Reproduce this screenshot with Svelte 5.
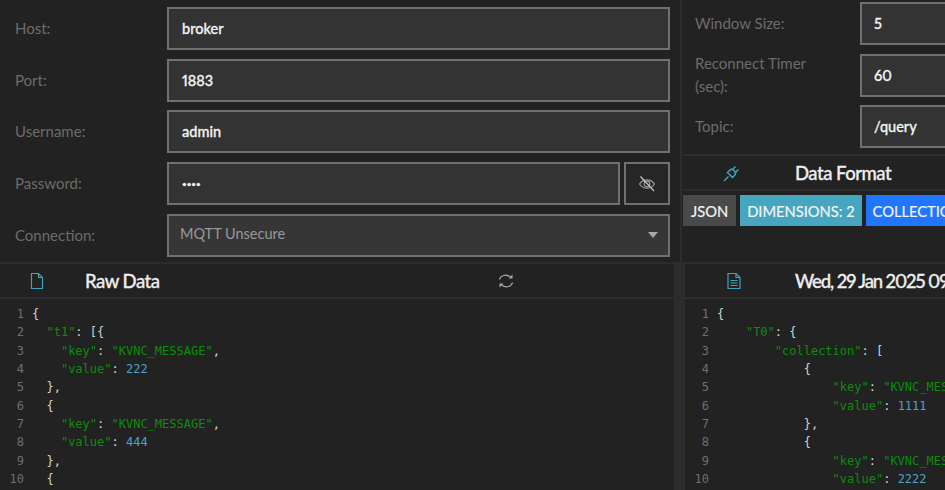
<script>
	const leftFields = [
		{ label: 'Host:', value: 'broker' },
		{ label: 'Port:', value: '1883' },
		{ label: 'Username:', value: 'admin' }
	];
	const rightFields = [
		{ label: 'Window Size:', value: '5' },
		{ label: 'Reconnect Timer (sec):', value: '60' },
		{ label: 'Topic:', value: '/query' }
	];
	const rawLines = [
		[['p', '{']],
		[['p', '  '], ['s', '"t1"'], ['p', ': [{']],
		[['p', '    '], ['s', '"key"'], ['p', ': '], ['s', '"KVNC_MESSAGE"'], ['p', ',']],
		[['p', '    '], ['s', '"value"'], ['p', ': '], ['n', '222']],
		[['p', '  },']],
		[['p', '  {']],
		[['p', '    '], ['s', '"key"'], ['p', ': '], ['s', '"KVNC_MESSAGE"'], ['p', ',']],
		[['p', '    '], ['s', '"value"'], ['p', ': '], ['n', '444']],
		[['p', '  },']],
		[['p', '  {']]
	];
	const parsedLines = [
		[['p', '{']],
		[['p', '    '], ['s', '"T0"'], ['p', ': {']],
		[['p', '        '], ['s', '"collection"'], ['p', ': [']],
		[['p', '            {']],
		[['p', '                '], ['s', '"key"'], ['p', ': '], ['s', '"KVNC_MESSAGE"'], ['p', ',']],
		[['p', '                '], ['s', '"value"'], ['p', ': '], ['n', '1111']],
		[['p', '            },']],
		[['p', '            {']],
		[['p', '                '], ['s', '"key"'], ['p', ': '], ['s', '"KVNC_MESSAGE"'], ['p', ',']],
		[['p', '                '], ['s', '"value"'], ['p', ': '], ['n', '2222']]
	];
</script>

{#snippet code(lines)}
	<div class="code">
		{#each lines as line, i}
			<div class="line">
				<span class="num">{i + 1}</span>
				<span class="src">{#each line as part}<span class={part[0]}>{part[1]}</span>{/each}</span>
			</div>
		{/each}
	</div>
{/snippet}

<div class="page">
	<div class="top">
		<section class="form">
			{#each leftFields as f}
				<div class="row">
					<span class="label">{f.label}</span>
					<div class="input">{f.value}</div>
				</div>
			{/each}
			<div class="row">
				<span class="label">Password:</span>
				<div class="pass">
					<div class="input dots">••••</div>
					<button class="eye" aria-label="Show password">
						<svg width="18" height="18" viewBox="0 0 18 18" fill="none" stroke="#9a9a9a" stroke-width="1.2">
							<path d="M1.5 9C3.5 6 6 4.8 9 4.8S14.5 6 16.500 9C14.500 12 12 13.200 9 13.200S3.500 12 1.500 9Z" />
							<circle cx="9" cy="9" r="2.800" />
							<path d="M2.500 1.500L16 16" stroke="#c4c4c4" />
						</svg>
					</button>
				</div>
			</div>
			<div class="row">
				<span class="label">Connection:</span>
				<div class="input select">MQTT Unsecure<span class="caret"></span></div>
			</div>
		</section>
		<section class="side">
			<div class="side-form">
				{#each rightFields as f}
					<div class="row side-row">
						<span class="label">{f.label}</span>
						<div class="input">{f.value}</div>
					</div>
				{/each}
			</div>
			<div class="head side-head">
				<span class="ico">
					<svg width="18" height="18" viewBox="0 0 18 18" fill="none" stroke="#3fa3bd" stroke-width="1.500">
						<path d="M1 17L5.500 12.500" />
						<path d="M4.500 8.500L9.500 13.500L11.500 11.500Q13.500 9.500 11.500 7L10.500 6Q8.500 4.500 6.500 6.500Z" />
						<path d="M9.500 5.500L12.500 2.500M12.500 8.500L15.500 5.500" />
					</svg>
				</span>
				<span class="title">Data Format</span>
			</div>
			<div class="tags">
				<span class="tag grey">JSON</span>
				<span class="tag teal">DIMENSIONS: 2</span>
				<span class="tag blue">COLLECTION</span>
			</div>
		</section>
	</div>
	<div class="bottom">
		<section class="panel raw">
			<div class="head">
				<span class="ico">
					<svg width="16" height="18" viewBox="0 0 16 18" fill="none" stroke="#3fa3bd" stroke-width="1.200">
						<path d="M2.500 1.500H9.500L13.500 5.500V16.500H2.500ZM9.500 1.500V5.500H13.500" />
					</svg>
				</span>
				<span class="title">Raw Data</span>
				<svg class="sync" width="16" height="18" viewBox="0 0 16 18" fill="none" stroke="#a8a8a8" stroke-width="1.100">
					<path d="M1.500 7.500C2.500 3.500 7.500 1.500 12.500 5" />
					<path d="M14.500 10.500C13.500 14.500 8.500 16.500 3.500 13" />
					<path d="M14.500 2.500V6.500H10.500Z" fill="#a8a8a8" stroke="none" />
					<path d="M1.500 15.500V11.500H5.500Z" fill="#a8a8a8" stroke="none" />
				</svg>
			</div>
			{@render code(rawLines)}
		</section>
		<div class="gutter"></div>
		<section class="panel parsed">
			<div class="head">
				<span class="ico">
					<svg width="16" height="18" viewBox="0 0 16 18" fill="none" stroke="#3fa3bd" stroke-width="1.200">
						<path d="M2 1.500H10L14 5.500V16.500H2ZM10 1.500V5.500H14" />
						<path d="M4.500 8.500H11.500M4.500 11H11.500M4.500 13.500H11.500" />
					</svg>
				</span>
				<span class="title date">Wed, 29 Jan 2025 09</span>
			</div>
			{@render code(parsedLines)}
		</section>
	</div>
</div>

<style>
	:global(body) {
		margin: 0;
		background: #222222;
		overflow: hidden;
	}
	.page {
		width: 945px;
		height: 490px;
		overflow: hidden;
		display: flex;
		flex-direction: column;
		font-family: "Lato", "Noto Sans", sans-serif;
		font-variant-numeric: proportional-nums;
		color: #fff;
	}
	.top {
		display: flex;
		height: 262px;
		flex: none;
	}
	.form {
		width: 670px;
		padding: 7px 0 0 15px;
		box-sizing: border-box;
		flex: none;
		display: flex;
		flex-direction: column;
		gap: 8.7px;
	}
	.row {
		display: grid;
		grid-template-columns: 152px 1fr;
		align-items: center;
	}
	.label {
		color: #6c6c6c;
		font-size: 15px;
		line-height: 23px;
	}
	.input {
		box-sizing: border-box;
		height: 43px;
		border: 2px solid #707070;
		background: #333333;
		padding: 0 13px;
		display: flex;
		align-items: center;
		font-size: 14.500px;
		font-weight: 500;
		-webkit-text-stroke: 0.3px #f2f2f2;
		color: #f2f2f2;
	}
	.pass {
		display: flex;
		gap: 4px;
	}
	.dots {
		flex: 1;
		font-size: 8px;
	}
	.eye {
		box-sizing: border-box;
		width: 46px;
		height: 43px;
		padding: 0;
		border: 2px solid #707070;
		background: #262626;
		display: flex;
		align-items: center;
		justify-content: center;
	}
	.select {
		position: relative;
		background: #363636;
		color: #999999;
		font-weight: 400;
		-webkit-text-stroke: 0;
		padding: 0 0 4px 11px;
		font-size: 14.500px;
	}
	.caret {
		position: absolute;
		right: 10px;
		top: 16px;
		border: 5px solid transparent;
		border-top: 6px solid #a8a8a8;
		border-bottom: 0;
	}
	.side {
		flex: 1;
		min-width: 0;
		margin-left: 10px;
		border-left: 2px solid #2c2c2c;
		display: flex;
		flex-direction: column;
	}
	.side-form {
		display: flex;
		flex-direction: column;
		gap: 7px;
		padding: 2px 0 6px 13px;
		border-bottom: 2px solid #2c2c2c;
	}
	.side-row {
		grid-template-columns: 165px 130px;
	}
	.side-row .label {
		width: 130px;
	}
	.side-row .input {
		padding: 0 12px;
	}
	.head {
		display: flex;
		align-items: center;
		height: 33px;
		border-bottom: 2px solid #2c2c2c;
		position: relative;
	}
	.ico {
		display: flex;
		flex: none;
		margin-left: 29px;
		width: 56px;
	}
	.title {
		font-size: 18.500px;
		font-weight: 500;
		letter-spacing: -0.5px;
		-webkit-text-stroke: 0.3px #eeeeee;
		color: #eeeeee;
		white-space: nowrap;
	}
	.date {
		letter-spacing: -1.1px;
	}
	.side-head .ico {
		margin-left: 41px;
		width: 72px;
	}
	.parsed .ico {
		margin-left: 41px;
		width: 69px;
	}
	.tags {
		display: flex;
		gap: 4px;
		padding: 4px 0 0 1px;
		white-space: nowrap;
	}
	.tag {
		height: 31px;
		display: flex;
		align-items: center;
		padding: 0 7px;
		font-size: 14.700px;
		-webkit-text-stroke: 0.2px #f4f4f4;
		flex: none;
		color: #f4f4f4;
	}
	.grey {
		background: #4a4a4a;
		padding: 0 8px;
	}
	.teal { background: #46a6bf; }
	.blue { background: #2176ff; }
	.bottom {
		flex: 1;
		min-height: 0;
		display: flex;
		border-top: 2px solid #2c2c2c;
	}
	.raw {
		width: 674px;
		flex: none;
		position: relative;
	}
	.gutter {
		width: 11px;
		flex: none;
		background: #2c2c2c;
	}
	.parsed {
		flex: 1;
		min-width: 0;
		overflow: hidden;
	}
	.sync {
		position: absolute;
		left: 498px;
		top: 8px;
	}
	.code {
		padding-top: 6px;
		font-family: "DejaVu Sans Mono", "Liberation Mono", monospace;
		font-size: 12px;
		line-height: 18.330px;
	}
	.line {
		display: flex;
		white-space: pre;
	}
	.num {
		width: 24px;
		text-align: right;
		color: #6f6f6f;
		margin-right: 8px;
		flex: none;
	}
	.p { color: #d4d4d4; }
	.s { color: #0c8c0c; }
	.n { color: #4aa3c4; }
</style>
